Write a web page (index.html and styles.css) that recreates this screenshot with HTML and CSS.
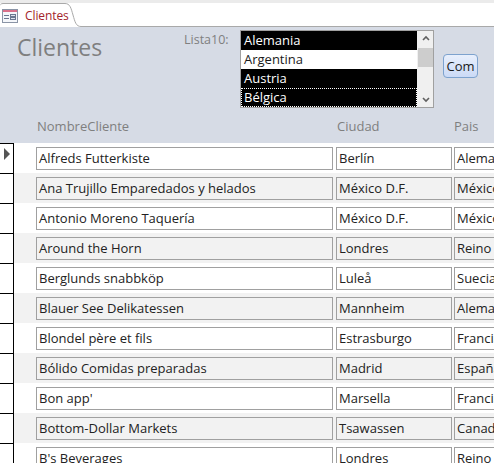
FILE: index.html
```html
<!DOCTYPE html>
<html lang="es">
<head>
<meta charset="utf-8">
<title>Clientes</title>
<link rel="stylesheet" href="styles.css">
</head>
<body>
<div class="tabbar">
  <div class="tab">
    <svg class="tab-icon" width="16" height="16" viewBox="0 0 16 16">
      <rect x="0.5" y="1.5" width="15" height="13" fill="#f4f6fa" stroke="#8a94a6"/>
      <rect x="1" y="2" width="14" height="2" fill="#d9708a"/>
      <line x1="2" y1="7.5" x2="7" y2="7.5" stroke="#6b7890"/>
      <line x1="2" y1="10.5" x2="7" y2="10.5" stroke="#6b7890"/>
      <rect x="8.5" y="6.5" width="5" height="2" fill="#dfe4ee" stroke="#6b7890"/>
      <rect x="8.5" y="9.5" width="5" height="2" fill="#dfe4ee" stroke="#6b7890"/>
    </svg>
    <span class="tab-text">Clientes</span>
  </div>
  <svg class="tab-curve" width="18" height="27" viewBox="0 0 18 27">
    <path d="M0 3.5 H1 C6 3.5 7 8 9 15 C11 22 12 26.5 17 26.5 H18" fill="none" stroke="#a9a9a9"/>
  </svg>
  <div class="tab-fill"></div>
</div>

<div class="header">
  <div class="header-top">
    <h1 class="title">Clientes</h1>
    <span class="list-label">Lista10:</span>
    <div class="listbox">
      <div class="list-items">
        <div class="item sel">Alemania</div>
        <div class="item">Argentina</div>
        <div class="item sel">Austria</div>
        <div class="item sel focus">Bélgica</div>
      </div>
      <div class="scroll">
        <svg class="arrow" width="16" height="14" viewBox="0 0 16 14"><path d="M5 9 L8 6 L11 9" fill="none" stroke="#606060" stroke-width="1.6"/></svg>
        <div class="thumb"></div>
        <div class="track"></div>
        <svg class="arrow" width="16" height="14" viewBox="0 0 16 14"><path d="M5 5 L8 8 L11 5" fill="none" stroke="#606060" stroke-width="1.6"/></svg>
      </div>
    </div>
    <button class="btn">Com</button>
  </div>
  <div class="col-labels">
    <span class="lbl lbl-nombre">NombreCliente</span>
    <span class="lbl lbl-ciudad">Ciudad</span>
    <span class="lbl lbl-pais">Pais</span>
  </div>
</div>

<div class="detail">
  <div class="row"><div class="sel-cell current"><span class="pointer"></span></div><div class="box b-nombre">Alfreds Futterkiste</div><div class="box b-ciudad">Berlín</div><div class="box b-pais">Alemania</div></div>
  <div class="row alt"><div class="sel-cell"></div><div class="box b-nombre">Ana Trujillo Emparedados y helados</div><div class="box b-ciudad">México D.F.</div><div class="box b-pais">México</div></div>
  <div class="row"><div class="sel-cell"></div><div class="box b-nombre">Antonio Moreno Taquería</div><div class="box b-ciudad">México D.F.</div><div class="box b-pais">México</div></div>
  <div class="row alt"><div class="sel-cell"></div><div class="box b-nombre">Around the Horn</div><div class="box b-ciudad">Londres</div><div class="box b-pais">Reino Unido</div></div>
  <div class="row"><div class="sel-cell"></div><div class="box b-nombre">Berglunds snabbköp</div><div class="box b-ciudad">Luleå</div><div class="box b-pais">Suecia</div></div>
  <div class="row alt"><div class="sel-cell"></div><div class="box b-nombre">Blauer See Delikatessen</div><div class="box b-ciudad">Mannheim</div><div class="box b-pais">Alemania</div></div>
  <div class="row"><div class="sel-cell"></div><div class="box b-nombre">Blondel père et fils</div><div class="box b-ciudad">Estrasburgo</div><div class="box b-pais">Francia</div></div>
  <div class="row alt"><div class="sel-cell"></div><div class="box b-nombre">Bólido Comidas preparadas</div><div class="box b-ciudad">Madrid</div><div class="box b-pais">España</div></div>
  <div class="row"><div class="sel-cell"></div><div class="box b-nombre">Bon app'</div><div class="box b-ciudad">Marsella</div><div class="box b-pais">Francia</div></div>
  <div class="row alt"><div class="sel-cell"></div><div class="box b-nombre">Bottom-Dollar Markets</div><div class="box b-ciudad">Tsawassen</div><div class="box b-pais">Canadá</div></div>
  <div class="row"><div class="sel-cell"></div><div class="box b-nombre">B's Beverages</div><div class="box b-ciudad">Londres</div><div class="box b-pais">Reino Unido</div></div>
</div>
</body>
</html>
```

FILE: styles.css
```css
* { box-sizing: border-box; }
html, body {
  margin: 0;
  padding: 0;
  width: 494px;
  height: 463px;
  overflow: hidden;
  background: #ffffff;
  font-family: "Open Sans", "Noto Sans", sans-serif;
}

.tabbar {
  display: flex;
  height: 27px;
  background: linear-gradient(#ebebeb 0, #ebebeb 3px, #ffffff 3px);
}
.tab {
  width: 64px;
  flex: none;
  margin-top: 3px;
  height: 24px;
  border-top: 1px solid #a9a9a9;
  border-top-left-radius: 3px;
  background: #ffffff;
  display: flex;
  align-items: center;
  padding-left: 2px;
  gap: 7px;
}
.tab-icon { flex: none; margin-top: 1px; }
.tab-text {
  font-size: 12px;
  color: #a3232b;
  letter-spacing: -0.1px;
}
.tab-curve { flex: none; display: block; }
.tab-fill {
  flex: 1;
  margin-top: 3px;
  border-bottom: 1px solid #a9a9a9;
}

.header {
  background: #d6dbe5;
  height: 116px;
  display: flex;
  flex-direction: column;
}
.header-top {
  display: flex;
  align-items: flex-start;
  height: 81px;
  padding-top: 3px;
}
.title {
  margin: 0;
  margin-left: 17px;
  margin-top: 1px;
  font-weight: normal;
  font-size: 23px;
  line-height: 32px;
  color: #7f7f7f;
  width: 167px;
}
.list-label {
  font-size: 12.5px;
  color: #7f7f7f;
  line-height: 16px;
  margin-top: 2px;
  width: 56px;
}
.listbox {
  width: 194px;
  height: 78px;
  border: 1px solid #a0a0a0;
  background: #ffffff;
  display: flex;
}
.list-items {
  flex: 1;
}
.item {
  height: 19px;
  font-size: 13px;
  line-height: 19px;
  padding-left: 3px;
  color: #1a1a1a;
}
.item.sel {
  background: #000000;
  color: #ffffff;
}
.item.focus {
  outline: 1px dotted #ffffff;
  outline-offset: -1px;
}
.scroll {
  width: 16px;
  flex: none;
  background: #f0f0f0;
  display: flex;
  flex-direction: column;
  border-left: 1px solid #f0f0f0;
}
.arrow { display: block; flex: none; }
.thumb {
  height: 19px;
  margin-top: 3px;
  background: #cdcdcd;
}
.track { flex: 1; }
.btn {
  margin-left: 9px;
  margin-top: 24px;
  width: 35px;
  height: 24px;
  border: 1px solid #7da2ce;
  border-radius: 4px;
  background: linear-gradient(#e8effc, #cbdaf6);
  font-family: "Open Sans", "Noto Sans", sans-serif;
  font-size: 13px;
  color: #1a1a1a;
  padding: 0;
}

.col-labels {
  display: flex;
  align-items: center;
  height: 35px;
  font-size: 13px;
  color: #7f7f7f;
  padding-top: 1px;
}
.lbl-nombre { margin-left: 37px; width: 300px; }
.lbl-ciudad { width: 117px; }

.detail { display: flex; flex-direction: column; }
.row {
  height: 30px;
  display: flex;
  align-items: flex-start;
  background: #ffffff;
}
.row.alt { background: #f2f2f2; }
.sel-cell {
  width: 14px;
  height: 30px;
  flex: none;
  background: #ffffff;
  border-right: 1px solid #000000;
  border-top: 1px solid #000000;
  position: relative;
}
.pointer {
  position: absolute;
  left: 4px;
  top: 4px;
  width: 0;
  height: 0;
  border-top: 6px solid transparent;
  border-bottom: 6px solid transparent;
  border-left: 6px solid #555555;
}
.box {
  flex: none;
  margin-top: 4px;
  height: 23px;
  border: 1px solid #a0a0a0;
  font-size: 13px;
  line-height: 21px;
  padding-left: 2px;
  color: #222222;
  white-space: nowrap;
  overflow: hidden;
}
.b-nombre { margin-left: 22px; width: 297px; }
.b-ciudad { margin-left: 3px; width: 116px; }
.b-pais { margin-left: 2px; width: 60px; }
```
